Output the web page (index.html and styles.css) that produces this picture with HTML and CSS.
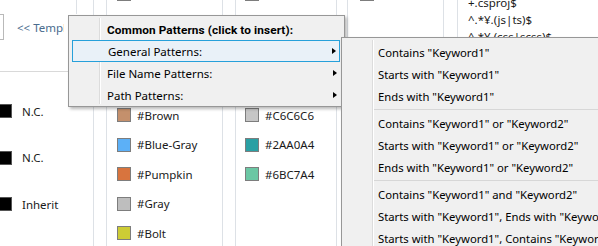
FILE: index.html
```html
<!DOCTYPE html>
<html>
<head>
<meta charset="utf-8">
<link rel="stylesheet" href="styles.css">
</head>
<body>
<div class="page">
  <div class="col col-a">
    <div class="a-top">
      <div class="tick"></div>
      <div class="a-bar">
        <div class="textbox"></div>
        <span class="tmpl">&lt;&lt; Template</span>
      </div>
    </div>
    <div class="nc-list">
      <div class="nc-row"><span class="sw sw-black"></span><span>N.C.</span></div>
      <div class="nc-row"><span class="sw sw-black"></span><span>N.C.</span></div>
      <div class="nc-row"><span class="sw sw-black"></span><span>Inherit</span></div>
    </div>
  </div>
  <div class="gap gap-12"></div>
  <div class="col col-b">
    <div class="swlist">
      <div class="swrow"><span class="sw" style="background:#9a9a9a"></span><span>#Black</span></div>
      <div class="swrow"><span class="sw" style="background:#e53935"></span><span>#Red</span></div>
      <div class="swrow"><span class="sw" style="background:#fb8c00"></span><span>#Orange</span></div>
      <div class="swrow"><span class="sw" style="background:#fdd835"></span><span>#Yellow</span></div>
      <div class="swrow"><span class="sw" style="background:#c4906c"></span><span>#Brown</span></div>
      <div class="swrow"><span class="sw" style="background:#5cb0f7"></span><span>#Blue-Gray</span></div>
      <div class="swrow"><span class="sw" style="background:#d8743e"></span><span>#Pumpkin</span></div>
      <div class="swrow"><span class="sw" style="background:#bebebe"></span><span>#Gray</span></div>
      <div class="swrow"><span class="sw" style="background:#cdcc35"></span><span>#Bolt</span></div>
    </div>
  </div>
  <div class="gap gap-12"></div>
  <div class="col col-c">
    <div class="swlist">
      <div class="swrow"><span class="sw" style="background:#9a9a9a"></span><span>#9A9A9A</span></div>
      <div class="swrow"><span class="sw" style="background:#f06292"></span><span>#F06292</span></div>
      <div class="swrow"><span class="sw" style="background:#ba68c8"></span><span>#BA68C8</span></div>
      <div class="swrow"><span class="sw" style="background:#7986cb"></span><span>#7986CB</span></div>
      <div class="swrow"><span class="sw" style="background:#c6c6c6"></span><span>#C6C6C6</span></div>
      <div class="swrow"><span class="sw" style="background:#2aa0a4"></span><span>#2AA0A4</span></div>
      <div class="swrow"><span class="sw" style="background:#6bc7a4"></span><span>#6BC7A4</span></div>
    </div>
  </div>
  <div class="gap gap-10"></div>
  <div class="col col-d">
    <div class="swlist">
      <div class="swrow"><span class="sw" style="background:#9a9a9a"></span><span>#Custom</span></div>
    </div>
  </div>
  <div class="gap gap-13"></div>
  <div class="col col-e">
    <div class="patlist">
      <div class="pat">+.csproj$</div>
      <div class="pat">^.*¥.(js|ts)$</div>
      <div class="pat">^.*¥.(css|scss)$</div>
    </div>
  </div>
</div>

<div class="menu menu-main">
  <div class="gutter-line"></div>
  <div class="mi mi-head">Common Patterns (click to insert):</div>
  <div class="mi mi-hot">General Patterns:<span class="arrow"></span></div>
  <div class="mi">File Name Patterns:<span class="arrow"></span></div>
  <div class="mi">Path Patterns:<span class="arrow"></span></div>
</div>

<div class="menu menu-sub">
  <div class="gutter-line"></div>
  <div class="mi">Contains "Keyword1"</div>
  <div class="mi">Starts with "Keyword1"</div>
  <div class="mi">Ends with "Keyword1"</div>
  <div class="msep"></div>
  <div class="mi">Contains "Keyword1" or "Keyword2"</div>
  <div class="mi">Starts with "Keyword1" or "Keyword2"</div>
  <div class="mi">Ends with "Keyword1" or "Keyword2"</div>
  <div class="msep"></div>
  <div class="mi">Contains "Keyword1" and "Keyword2"</div>
  <div class="mi">Starts with "Keyword1", Ends with "Keyword2"</div>
  <div class="mi">Starts with "Keyword1", Contains "Keyword2"</div>
</div>
</body>
</html>
```

FILE: styles.css
```css
html, body {
  margin: 0;
  padding: 0;
}
body {
  width: 598px;
  height: 246px;
  overflow: hidden;
  position: relative;
  background: #ffffff;
  font-family: "Noto Sans", "Open Sans", sans-serif;
  font-size: 11.5px;
  color: #1a1a1a;
}
.page {
  display: flex;
  height: 246px;
  overflow: hidden;
}
.col, .gap {
  flex: none;
  border-right: 1px solid #dde1e6;
  height: 100%;
  box-sizing: content-box;
}
.col-a { width: 93px; }
.col-b { width: 115px; }
.col-c { width: 100px; }
.col-d { width: 95px; }
.col-e { flex: 1; border-right: none; }
.gap-12 { width: 12px; }
.gap-10 { width: 10px; }
.gap-13 { width: 13px; }

/* column A */
.a-top {
  height: 71px;
  border-bottom: 1px solid #d9d9d9;
  display: flex;
  flex-direction: column;
}
.tick {
  width: 77px;
  height: 14px;
  border-right: 1px solid #dde1e6;
  box-sizing: border-box;
}
.a-bar {
  display: flex;
  align-items: center;
  gap: 13px;
  height: 26px;
}
.textbox {
  width: 4px;
  height: 26px;
  box-sizing: border-box;
  border: 1px solid #b9b9b9;
  border-left: none;
  background: #fff;
}
.tmpl {
  color: #4a6c8e;
  white-space: nowrap;
  font-size: 11.5px;
  width: 47px;
  overflow: hidden;
  flex: none;
}
.nc-list {
  padding-top: 16px;
}
.nc-row {
  height: 46.5px;
  display: flex;
  align-items: center;
  gap: 10px;
  margin-left: -2px;
}
.sw {
  width: 14px;
  height: 14px;
  box-sizing: border-box;
  border: 1px solid #7d7d7d;
  flex: none;
}
.sw-black {
  background: #000;
  border-color: #555;
}

/* swatch columns */
.swlist {
  margin-top: -23.75px;
}
.swrow {
  height: 29.5px;
  display: flex;
  align-items: center;
  gap: 6px;
  white-space: nowrap;
}
.swrow:first-child {
  height: 35.5px;
}
.col-b .swlist { padding-left: 10px; }
.col-c .swlist { padding-left: 9px; }
.col-d .swlist { padding-left: 12px; }

/* column E */
.patlist {
  padding-left: 10px;
  margin-top: -6px;
}
.pat {
  height: 17px;
  line-height: 17px;
  white-space: nowrap;
}

/* menus */
.menu {
  position: absolute;
  background: #f0f0f0;
  border: 1px solid #979797;
  box-shadow: 2px 2px 3px rgba(0, 0, 0, 0.28);
  color: #000;
  font-size: 11.5px;
}
.gutter-line {
  position: absolute;
  top: 2px;
  bottom: 2px;
  width: 1px;
  background: #dcdcdc;
  box-shadow: 1px 0 0 #ffffff;
}
.mi {
  position: relative;
  height: 22px;
  line-height: 24px;
  white-space: nowrap;
}
.menu-main {
  left: 68px;
  top: 15px;
  width: 277px;
  box-sizing: border-box;
  padding: 2px 0 0 0;
  height: 92px;
}
.menu-main .gutter-line { left: 30px; }
.menu-main .mi { padding-left: 38px; }
.mi-head {
  font-family: Roboto, "Noto Sans", sans-serif;
  font-weight: bold;
  font-size: 11.8px;
  letter-spacing: 0.1px;
}
.mi-hot {
  margin: 0 4px 0 3px;
  padding-left: 35px !important;
  border: 1px solid #26a0da;
  background: #e9f1f8;
  height: 20px;
  line-height: 22px;
  box-sizing: content-box;
}
.arrow {
  position: absolute;
  right: 7px;
  top: 50%;
  margin-top: -3.5px;
  width: 0;
  height: 0;
  border-top: 3.5px solid transparent;
  border-bottom: 3.5px solid transparent;
  border-left: 4px solid #000;
}
.mi-hot .arrow { right: 3px; }
.menu-sub {
  left: 341px;
  top: 37px;
  width: 320px;
  height: 260px;
  padding: 3px 0 0 0;
  box-sizing: border-box;
}
.menu-sub .gutter-line { left: 30px; }
.menu-sub .mi { padding-left: 36px; font-size: 11.3px; }
.msep {
  height: 5px;
  margin-left: 32px;
  position: relative;
}
.msep::after {
  content: "";
  position: absolute;
  left: 0;
  right: 0;
  top: 2px;
  height: 1px;
  background: #d7d7d7;
}
```
